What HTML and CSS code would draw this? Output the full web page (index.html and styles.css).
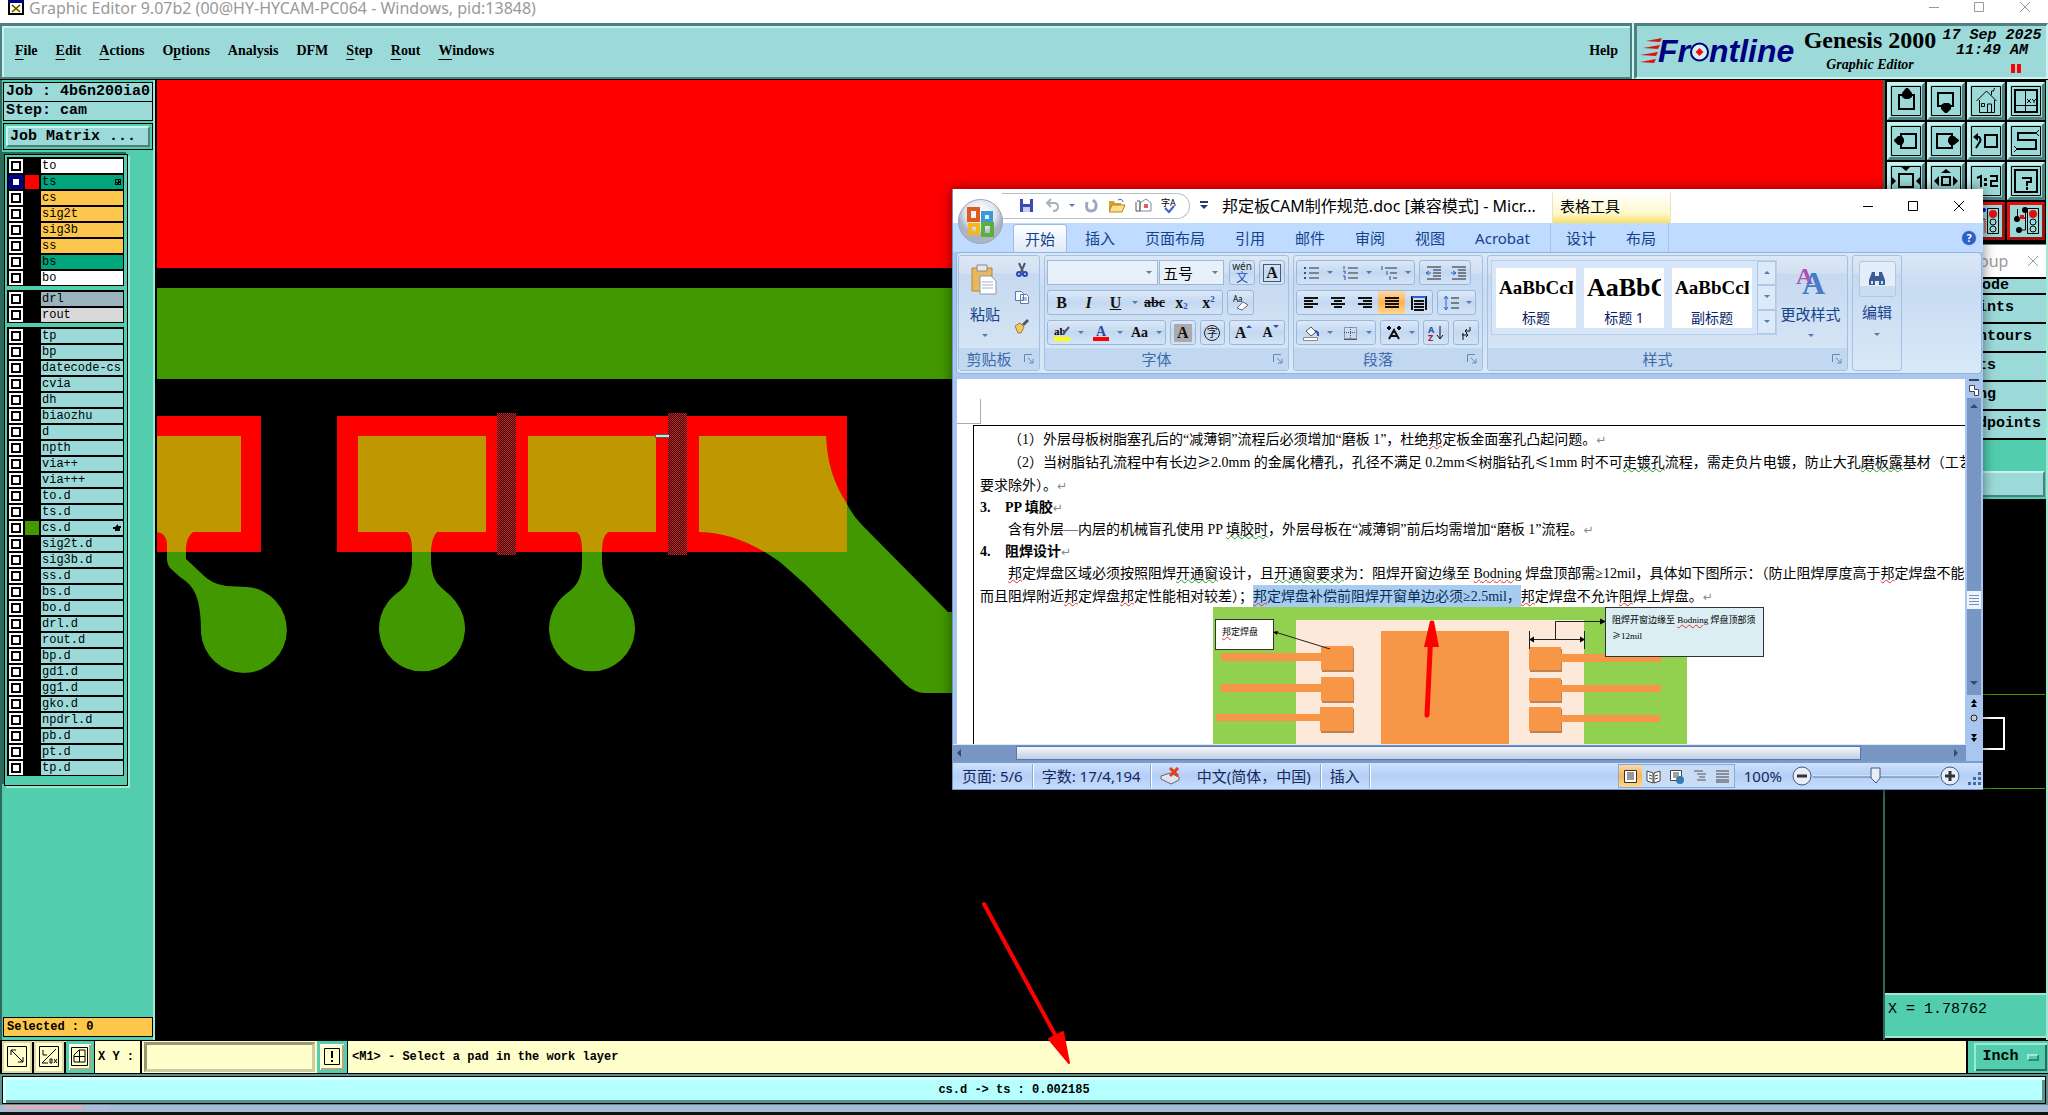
FILE: index.html
```html
<!DOCTYPE html>
<html lang="zh-CN">
<head>
<meta charset="utf-8">
<title>Graphic Editor</title>
<link rel="stylesheet" href="styles.css">
</head>
<body>
<header class="titlebar">
  <svg class="app-icon" width="16" height="16"><rect x="1" y="-2" width="14" height="16" fill="#fff" stroke="#000" stroke-width="2"/><path d="M0 0h16v3H0z" fill="#000080"/><path d="M4 5l8 7M12 5l-8 7" stroke="#c8b400" stroke-width="2"/><path d="M4 5l8 7M12 5l-8 7" stroke="#222" stroke-width="1"/></svg>
  <h1>Graphic Editor 9.07b2 (00@HY-HYCAM-PC064 - Windows, pid:13848)</h1>
  <svg width="110" height="16" fill="none" stroke="#999"><path d="M0 7.500h10M45.500 2.500h9v9h-9zM91 2l10 10M101 2l-10 10"/></svg>
</header>

<div class="menurow">
  <nav class="menubar">
    <a href="#"><u>F</u>ile</a><a href="#"><u>E</u>dit</a><a href="#"><u>A</u>ctions</a><a href="#">O<u>p</u>tions</a><a href="#">Analysis</a><a href="#">DFM</a><a href="#"><u>S</u>tep</a><a href="#"><u>R</u>out</a><a href="#"><u>W</u>indows</a>
    <a class="help" href="#">Help</a>
  </nav>
  <div class="brand">
    <div class="logo">
      <svg width="22" height="26" fill="#e01010"><path d="M6 3l16-3-2 4zM3 10l17-3-2 4zM0 17l18-3-2 4zM0 24l16-3-2 4z"/></svg>
      <b>Fr<svg width="19" height="22"><circle cx="9.500" cy="12" r="8.500" fill="#d8f0f0" stroke="#000080" stroke-width="2"/><path d="M9.500 8l4 4-4 4-4-4z" fill="#f01010"/></svg>ntline</b>
    </div>
    <div class="product"><strong>Genesis 2000</strong><em>Graphic Editor</em></div>
    <div class="clock"><span>17 Sep 2025</span><span>11:49 AM</span><i class="pause"></i></div>
  </div>
</div>

<main class="workspace">
  <aside class="left">
    <div class="jobbox">
      <div class="cell">Job : 4b6n200ia0</div>
      <div class="cell">Step: cam</div>
    </div>
    <div class="matrix"><button>Job Matrix ...</button></div>
    <div class="layerzone">
      <div class="layers">
        <ul>
          <li><label><input type="checkbox"><i></i><span class="w">to</span></label></li>
          <li><label><input type="checkbox" checked><i class="red"></i><span class="g">ts<svg width="6" height="6"><path d="M0 0h6v6H0zM1 1v2h2V1zM4 1v1h1V1zM1 4v1h1V4zM4 4v1h1V4z" fill-rule="evenodd"/></svg></span></label></li>
          <li><label><input type="checkbox"><i></i><span class="o">cs</span></label></li>
          <li><label><input type="checkbox"><i></i><span class="o">sig2t</span></label></li>
          <li><label><input type="checkbox"><i></i><span class="o">sig3b</span></label></li>
          <li><label><input type="checkbox"><i></i><span class="o">ss</span></label></li>
          <li><label><input type="checkbox"><i></i><span class="g">bs</span></label></li>
          <li><label><input type="checkbox"><i></i><span class="w">bo</span></label></li>
        </ul>
        <ul>
          <li><label><input type="checkbox"><i></i><span class="s">drl</span></label></li>
          <li><label><input type="checkbox"><i></i><span class="l">rout</span></label></li>
        </ul>
        <ul>
          <li><label><input type="checkbox"><i></i><span>tp</span></label></li>
          <li><label><input type="checkbox"><i></i><span>bp</span></label></li>
          <li><label><input type="checkbox"><i></i><span>datecode-cs</span></label></li>
          <li><label><input type="checkbox"><i></i><span>cvia</span></label></li>
          <li><label><input type="checkbox"><i></i><span>dh</span></label></li>
          <li><label><input type="checkbox"><i></i><span>biaozhu</span></label></li>
          <li><label><input type="checkbox"><i></i><span>d</span></label></li>
          <li><label><input type="checkbox"><i></i><span>npth</span></label></li>
          <li><label><input type="checkbox"><i></i><span>via++</span></label></li>
          <li><label><input type="checkbox"><i></i><span>via+++</span></label></li>
          <li><label><input type="checkbox"><i></i><span>to.d</span></label></li>
          <li><label><input type="checkbox"><i></i><span>ts.d</span></label></li>
          <li><label><input type="checkbox"><i class="green"></i><span>cs.d<svg width="8" height="8"><path d="M0 3h2l3-3v2h3v2H7v3H2V5H0z"/></svg></span></label></li>
          <li><label><input type="checkbox"><i></i><span>sig2t.d</span></label></li>
          <li><label><input type="checkbox"><i></i><span>sig3b.d</span></label></li>
          <li><label><input type="checkbox"><i></i><span>ss.d</span></label></li>
          <li><label><input type="checkbox"><i></i><span>bs.d</span></label></li>
          <li><label><input type="checkbox"><i></i><span>bo.d</span></label></li>
          <li><label><input type="checkbox"><i></i><span>drl.d</span></label></li>
          <li><label><input type="checkbox"><i></i><span>rout.d</span></label></li>
          <li><label><input type="checkbox"><i></i><span>bp.d</span></label></li>
          <li><label><input type="checkbox"><i></i><span>gd1.d</span></label></li>
          <li><label><input type="checkbox"><i></i><span>gg1.d</span></label></li>
          <li><label><input type="checkbox"><i></i><span>gko.d</span></label></li>
          <li><label><input type="checkbox"><i></i><span>npdrl.d</span></label></li>
          <li><label><input type="checkbox"><i></i><span>pb.d</span></label></li>
          <li><label><input type="checkbox"><i></i><span>pt.d</span></label></li>
          <li><label><input type="checkbox"><i></i><span>tp.d</span></label></li>
        </ul>
      </div>
    </div>
    <div class="selected">Selected : 0</div>
  </aside>

  <svg class="board" aria-label="PCB view">
    <defs>
      <pattern id="hatch" width="2" height="2" patternUnits="userSpaceOnUse"><path d="M0 0h2v2H0z" fill="#1c1414"/><path d="M0 0h1v1H0zM1 1h1v1H1z" fill="#e01818"/></pattern>
      <clipPath id="mask"><path d="M0 416h261v136H0zM337 416h510v136H337z"/></clipPath>
      <g id="copper">
        <path d="M100 436H241V532H193Q187 536 186 547V559L201 573Q211 584 226 586L247 587A43 43 0 1 1 201 633Q201 603 194 591C190 584 186 581 180 577L170 568Q167 564 167 558V543Q166 533 157 532H100z"/>
        <path d="M358 436H486V532H437Q432 537 431 549V563Q432 576 437 583C444 591 450 594 456 602A43 43 0 1 1 388 602C394 594 402 591 407 583Q411 575 412 563V549Q412 536 407 532H358z"/>
        <path d="M528 436H656V532H608Q602 537 602 549V563Q603 576 608 583C614 591 620 594 626 602A43 43 0 1 1 558 602C564 594 572 591 577 583Q582 575 582 563V549Q582 536 577 532H528z"/>
        <path d="M699 436H826Q827 474 847 504Q853 516 862 525L948 612H990V693H925Q915 693 905 684L806 585L780 562Q765 552 763 551Q730 532 699 532z"/>
      </g>
    </defs>
    <rect width="100%" height="188" fill="#f00"/>
    <rect y="208" width="100%" height="91" fill="#429800"/>
    <g transform="translate(-157 -80)">
      <path d="M100 416h161v136H100zM337 416h510v136H337z" fill="#f00"/>
      <use href="#copper" fill="#429800"/>
      <g clip-path="url(#mask)"><use href="#copper" fill="#bf9700"/></g>
      <path d="M497 413h19v142h-19zM668 413h19v142h-19z" fill="url(#hatch)"/>
      <path d="M655 434h14v4h-14z" fill="#555"/><path d="M656 435h13v2h-13z" fill="#ddd"/>
    </g>
  </svg>

  <aside class="right">
    <div class="tools">
      <button><svg><path class="f" d="M.5.500h29v29H.500z"/><path class="t" d="M8 9h15v14H8z"/><path d="M15 2h2l4 5v4l-3 2h-4l-3-2V7z"/></svg></button>
      <button><svg><path class="f" d="M.500.500h29v29H.500z"/><path class="t" d="M7 7h15v13H7z"/><path d="M14 27h2l4-4v-4l-2-2h-5l-3 2v4z"/></svg></button>
      <button><svg><path class="f" d="M.500.500h29v29H.500zM5.500 15l10-10 10 10M8.500 14v12.500h15V14M16.500 26v-8h4v8M10.500 17.500h3v3h-3zM20.500 9V5h2l1-3"/></svg></button>
      <button><svg><path class="f" d="M.500.500h29v29H.500zM14.500 4v22M4 19.500h22M16 13l4 4M20 13l-4 4M21 13l2 2 2-2M23 15v2"/><path class="t" d="M4 4h22v22H4z"/></svg></button>
      <button><svg><path class="f" d="M.500.500h29v29H.500z"/><path class="t" d="M10 8h15v14H10z"/><path d="M3 14l4-4h4l2 3v3l-2 3H7l-4-4z"/></svg></button>
      <button><svg><path class="f" d="M.500.500h29v29H.500z"/><path class="t" d="M6 8h15v14H6z"/><path d="M28 14l-5-4h-4l-2 3v3l2 3h4l5-4z"/></svg></button>
      <button><svg><path class="f" d="M.500.500h29v29H.500z"/><path class="t" d="M14 9h12v12H14zM4 11h4q3 3 0 6l-3 5"/><path d="M2 11l5-4v8z"/></svg></button>
      <button><svg><path class="f" d="M.500.500h29v29H.500zM28 4l-3 3 3 3M3 20l3 3-3 3"/><path class="t" d="M25 7H7v7h18v9H6"/></svg></button>
      <button><svg><path class="f" d="M.500.500h29v29H.500z"/><path class="t" d="M8 8h14v13H8z"/><path d="M0 10l5 5-5 5zM30 10l-5 5 5 5zM9 0h11l-5 5z"/></svg></button>
      <button><svg><path class="f" d="M.500.500h29v29H.500z"/><path class="t" d="M11 11h8v8h-8z"/><path d="M3 15l5-5v10zM27 15l-5-5v10zM10 7l5-4 5 4zM10 23l5 4 5-4z"/></svg></button>
      <button><svg><path class="f" d="M.500.500h29v29H.500z"/><path class="t" d="M6 12l4-2v11M19 10h7v5h-6v5h7"/><path d="M13 12h3v3h-3zM13 17h3v3h-3z"/></svg></button>
      <button><svg><path class="f" d="M.500.500h29v29H.500z"/><path class="t" d="M4 4h22v22H4zM11 12h9v4h-4v4"/><path d="M15 21h2v3h-2z"/></svg></button>
      <button class="alert"><svg><path class="f" d="M.500.500h29v29H.500z"/></svg></button>
      <button class="alert"><svg><path class="f" d="M.500.500h29v29H.500z"/></svg></button>
      <button class="alert"><svg><path class="f" d="M16.500 2.500h11v25h-11z"/><path d="M8 13h6v14" fill="none" stroke="#e01010"/><circle cx="22" cy="8" r="4" fill="#e01010"/><circle class="f" cx="22" cy="16" r="3"/><circle class="f" cx="22" cy="23" r="3"/><circle cx="13" cy="4" r="2" fill="#00f"/></svg></button>
      <button class="alert"><svg><path class="f" d="M16.500 2.500h11v25h-11zM6.500 3v10M14.500 5v19H8"/><circle cx="22" cy="8" r="4" fill="#e01010"/><circle class="f" cx="22" cy="16" r="3"/><circle class="f" cx="22" cy="23" r="3"/><circle cx="6" cy="13" r="3"/><circle cx="14" cy="4" r="3"/><circle cx="8" cy="24" r="3"/><path d="M8 12h6M10 9v3M12 9v3" stroke="#e01010" stroke-width="2"/></svg></button>
    </div>
    <section class="popup">
      <header><span>oup</span><svg width="12" height="12" stroke="#999" fill="none"><path d="M1 1l10 10M11 1L1 11"/></svg></header>
      <div class="mode">ode</div>
      <a href="#">ints</a><a href="#">ntours</a><a href="#">ts</a><a href="#">ng</a><a href="#">dpoints</a>
      <div class="popfoot"><button aria-label="Close"></button></div>
    </section>
    <svg class="minimap"><path d="M0 195.500h160M0 289.500h160" stroke="#429800"/><path d="M18 219h101v31H18z" fill="none" stroke="#fff" stroke-width="2"/></svg>
    <div class="coords">X = 1.78762</div>
  </aside>
</main>

<form class="xybar">
  <button type="button" class="tick" aria-label="Snap"><svg width="20" height="22" fill="none" stroke="#000"><path d="M.500.500h19v20H.500zM4 4l12 12M4 9V4h5M16 11v5h-5"/></svg></button>
  <button type="button" class="tick" aria-label="Angle"><svg width="20" height="22" fill="none" stroke="#000"><path d="M.500.500h19v20H.500zM3 17L17 3M3 17h6M4 4v5h4M11 13h2v4h-2zM15 13l3 4M18 13l-3 4"/></svg></button>
  <button type="button" class="tick on" aria-label="Grid"><svg width="18" height="20" fill="none" stroke="#000"><path d="M.500.500h16v18H.500zM3 8l5-5h6v12H3zM8.500 3v12M3 9.500h11"/></svg></button>
  <label for="xy">X Y :</label>
  <input id="xy" type="text">
  <button type="button" class="tick on bang" aria-label="Message"><svg width="16" height="18" fill="none" stroke="#000"><path d="M.500.500h15v16H.500z"/><path d="M8 3v7M8 12v2" stroke-width="2"/></svg></button>
  <output>&lt;M1&gt; - Select a pad in the work layer</output>
  <button type="button" class="unit">Inch <i></i></button>
</form>
<footer class="status"><p>cs.d -&gt; ts : 0.002185</p></footer>
<div class="taskedge"><i class="pink"></i><i class="lav"></i></div>

<section class="word">
  <header class="wtitle">
    <div class="orb"><svg width="46" height="46"><defs><radialGradient id="og" cy=".3"><stop offset="0" stop-color="#fff"/><stop offset=".7" stop-color="#dfe4ec"/><stop offset="1" stop-color="#aab4c6"/></radialGradient></defs><circle cx="22.500" cy="22.500" r="22" fill="url(#og)" stroke="#9aa5b8"/><g fill="none" stroke-width="4"><path d="M11 10h9v11h-9z" stroke="#e05a20"/><path d="M25 14h8v8h-8z" stroke="#3a9ad8"/><path d="M12 26h8v8h-8z" stroke="#f5b81c"/><path d="M25 25h9v11h-9z" stroke="#5eae3a"/></g></svg></div>
    <div class="qat">
      <button aria-label="保存"><svg><path d="M1 1h13v13H1z" fill="#3a48b8"/><path d="M4 1h7v5H4z" fill="#fff"/><path d="M4 9h7v5H4z" fill="#c8d0f0"/></svg></button>
      <button class="n" aria-label="撤消"><svg fill="none" stroke="#a8b0c0" stroke-width="2"><path d="M3 5h6q4 0 4 4t-5 4M6 1L2 5l4 4"/></svg></button>
      <button class="n" aria-label="撤消列表"><svg class="dd"><path d="M0 0h6L3 3z"/></svg></button>
      <button aria-label="重复"><svg fill="none" stroke="#9aa8c4" stroke-width="3"><path d="M4 4q-2 9 4 9t5-8M10 2l3 3"/></svg></button>
      <button aria-label="打开"><svg><path d="M0 3h5l1 2h6v9H0z" fill="#d8a030"/><path d="M3 7h13l-3 7H0z" fill="#ffe08a" stroke="#b88418"/><path d="M9 2q4-2 5 2" fill="none" stroke="#3a62b0"/></svg></button>
      <button aria-label="附件"><svg><path d="M5 5l6-4 5 4v8H5z" fill="#fff" stroke="#7a8aa8"/><path d="M9 6h4v4H9z" fill="#e06060"/><path d="M1 4v9h4V3H2" fill="none" stroke="#555"/></svg></button>
      <button aria-label="拼写"><svg><text x="0" y="8" font-size="9">字A</text><path d="M4 10l4 4 5-6" fill="none" stroke="#3a62c8" stroke-width="2"/></svg></button>
    </div>
    <svg class="more" width="8" height="10"><path d="M0 0h8v2H0zM0 4h8l-4 4z" fill="#1e3c78"/></svg>
    <h2>邦定板CAM制作规范.doc [兼容模式] - Micr...</h2>
    <div class="ctx">表格工具</div>
    <svg class="wctl" width="102" height="14" fill="none" stroke="#000"><path d="M0 7.500h10M45.500 2.500h9v9h-9zM91 2l10 10M101 2l-10 10"/></svg>
  </header>
  <nav class="tabs">
    <a class="on" href="#">开始</a><a href="#">插入</a><a href="#">页面布局</a><a href="#">引用</a><a href="#">邮件</a><a href="#">审阅</a><a href="#">视图</a><a href="#">Acrobat</a>
    <span class="ctxtabs"><a href="#">设计</a><a href="#">布局</a></span>
    <button class="whelp">?</button>
  </nav>
  <div class="ribbon">
    <section class="grp clip">
      <div class="body">
        <button class="big"><svg width="28" height="32"><path d="M1 4h20v23H1z" fill="#e8b860" stroke="#b88430"/><path d="M6 1h10v6H6z" fill="#e8e8e8" stroke="#888"/><path d="M9 12h11l5 5v13H9z" fill="#fff" stroke="#8a9ab8"/><path d="M11 18h11M11 21h11M11 24h11" stroke="#a0b0cc"/></svg><span>粘贴</span><svg class="dd"><path d="M0 0h6L3 3z"/></svg></button>
        <div class="stack">
          <button aria-label="剪切"><svg><path d="M5 1l4 9M11 1L7 10" stroke="#556" fill="none" stroke-width="2"/><circle cx="5" cy="12" r="2" fill="none" stroke="#2a48b0" stroke-width="2"/><circle cx="11" cy="12" r="2" fill="none" stroke="#2a48b0" stroke-width="2"/></svg></button>
          <button aria-label="复制"><svg fill="#fff" stroke="#5878b0"><path d="M1.500 1.500h6l2 2v7h-8zM6.500 4.500h6l2 2v7h-8z"/><path d="M8 8h5M8 10h5"/></svg></button>
          <button aria-label="格式刷"><svg><path d="M1 8l5-3 4 4-3 6H4z" fill="#f0c860" stroke="#a08030"/><path d="M8 6l5-5 2 2-5 5z" fill="#556"/></svg></button>
        </div>
      </div>
      <h3><span>剪贴板</span><svg class="lch"><path d="M.500 8V.500H8M4 4l5 5M9 5v4H5"/></svg></h3>
    </section>
    <section class="grp font">
      <div class="body rows">
        <div class="row">
          <span class="set combo"><input class="fname" type="text" aria-label="字体"><button aria-label="字体列表"><svg class="dd"><path d="M0 0h6L3 3z"/></svg></button></span><span class="set combo"><input class="fsize" type="text" value="五号" aria-label="字号"><button aria-label="字号列表"><svg class="dd"><path d="M0 0h6L3 3z"/></svg></button></span>
          <button class="one wen"><small>wén</small><span>文</span></button>
          <button class="one serif"><span class="boxed">A</span></button>
        </div>
        <div class="row">
          <span class="set serif"><button>B</button><button><i>I</i></button><button><u>U</u></button><button class="arr"><svg class="dd"><path d="M0 0h6L3 3z"/></svg></button><button class="sm"><s>abc</s></button><button>x<sub>2</sub></button><button>x<sup>2</sup></button></span>
          <button class="one"><svg><text x="0" y="7" font-size="8">Aa</text><path d="M4 13l6-6 5 3-6 5z" fill="#fff" stroke="#667"/></svg></button>
        </div>
        <div class="row">
          <span class="set serif"><button><svg><text x="0" y="10" font-size="11">ab</text><path d="M9 9l6-7" stroke="#556" stroke-width="2"/><path d="M0 12h16v4H0z" fill="#ff0"/></svg></button><button class="arr"><svg class="dd"><path d="M0 0h6L3 3z"/></svg></button><button><svg><text x="3" y="11" font-size="14" font-weight="bold" fill="#2a50a0">A</text><path d="M0 12h16v4H0z" fill="#f00"/></svg></button><button class="arr"><svg class="dd"><path d="M0 0h6L3 3z"/></svg></button><button class="sm">Aa</button><button class="arr"><svg class="dd"><path d="M0 0h6L3 3z"/></svg></button></span>
          <button class="one serif"><span class="shade">A</span></button>
          <button class="one"><span class="ring">字</span></button>
          <span class="set serif"><button>A<svg class="dd tip"><path d="M0 3h6L3 0z"/></svg></button><button class="sm">A<svg class="dd tip"><path d="M0 0h6L3 3z"/></svg></button></span>
        </div>
      </div>
      <h3><span>字体</span><svg class="lch"><path d="M.500 8V.500H8M4 4l5 5M9 5v4H5"/></svg></h3>
    </section>
    <section class="grp para">
      <div class="body rows">
        <div class="row">
          <span class="set"><button aria-label="项目符号"><svg><path d="M6 3h10M6 8h10M6 13h10" stroke="#333"/><path d="M1 2h2v2H1zM1 7h2v2H1zM1 12h2v2H1z" fill="#2a50a0"/></svg></button><button class="arr"><svg class="dd"><path d="M0 0h6L3 3z"/></svg></button><button aria-label="编号"><svg><path d="M6 3h10M6 8h10M6 13h10" stroke="#333"/><path d="M2 1v3M1 6h2v3M1 11h2v4" stroke="#2a50a0" fill="none"/></svg></button><button class="arr"><svg class="dd"><path d="M0 0h6L3 3z"/></svg></button><button aria-label="多级"><svg><path d="M4 3h12M9 8h7M12 13h4" stroke="#333"/><path d="M1 1v4M6 6v4M9 11v4" stroke="#2a50a0"/></svg></button><button class="arr"><svg class="dd"><path d="M0 0h6L3 3z"/></svg></button></span>
          <span class="set"><button aria-label="减少缩进"><svg stroke="#222"><path d="M2 2h14M8 5h8M8 8h8M8 11h8M2 14h14"/><path d="M1 8h5M4 6L1 8l3 2" stroke="#2a60d0" fill="none"/></svg></button><button aria-label="增加缩进"><svg stroke="#222"><path d="M2 2h14M8 5h8M8 8h8M8 11h8M2 14h14"/><path d="M1 8h5M3 6l3 2-3 2" stroke="#2a60d0" fill="none"/></svg></button></span>
        </div>
        <div class="row">
          <span class="set"><button aria-label="左"><svg class="ln"><path d="M1 3h14M1 6h9M1 9h14M1 12h9"/></svg></button><button aria-label="中"><svg class="ln"><path d="M1 3h14M4 6h8M1 9h14M4 12h8"/></svg></button><button aria-label="右"><svg class="ln"><path d="M1 3h14M6 6h9M1 9h14M6 12h9"/></svg></button><button class="hot" aria-label="两端"><svg class="ln"><path d="M1 3h14M1 6h14M1 9h14M1 12h14"/></svg></button><button aria-label="分散"><svg class="ln"><path d="M3 6h10M3 9h10M3 12h10M3 15h10M1 1v14M15 1v14"/><path d="M1 2h14" stroke="#2a60d0"/></svg></button></span>
          <span class="set"><button aria-label="行距"><svg><path d="M8 3h8M8 8h8M8 13h8" stroke="#222"/><path d="M3 2v12M1 4l2-3 2 3M1 12l2 3 2-3" stroke="#2a60d0" fill="none"/></svg></button><button class="arr"><svg class="dd"><path d="M0 0h6L3 3z"/></svg></button></span>
        </div>
        <div class="row">
          <span class="set"><button aria-label="底纹"><svg><path d="M3 6l5-4 5 5-5 4z" fill="#fff" stroke="#556"/><path d="M12 6q4 1 3 5" stroke="#2a50a0" stroke-width="2" fill="none"/><path d="M.500 12.500h14v3H.500z" fill="#ffe" stroke="#889"/></svg></button><button class="arr"><svg class="dd"><path d="M0 0h6L3 3z"/></svg></button><button aria-label="框线"><svg fill="none" stroke="#556"><path stroke-dasharray="1 1" d="M2.500 2.500h12v11h-12zM8.500 2v11M2 7.500h12"/><path d="M2 14.500h13"/></svg></button><button class="arr"><svg class="dd"><path d="M0 0h6L3 3z"/></svg></button></span>
          <span class="set"><button aria-label="字符缩放"><svg fill="none" stroke="#111" stroke-width="2"><path d="M3 14l5-9 5 9M5 11h6M1 3h4M3 1v4M11 3h4M13 1v4"/></svg></button><button class="arr"><svg class="dd"><path d="M0 0h6L3 3z"/></svg></button></span>
          <button class="one" aria-label="排序"><svg><text x="0" y="8" font-size="9" font-weight="bold" fill="#2a50a0">A</text><text x="0" y="16" font-size="9" font-weight="bold" fill="#a02020">Z</text><path d="M12 1v12M9 10l3 4 3-4" stroke="#111" fill="none"/></svg></button>
          <button class="one" aria-label="标记"><svg fill="none" stroke="#111"><path d="M12 2v4H7M9 4L7 6l2 2M4 10h6M8 8l2 2-2 2M5 8v7"/></svg></button>
        </div>
      </div>
      <h3><span>段落</span><svg class="lch"><path d="M.500 8V.500H8M4 4l5 5M9 5v4H5"/></svg></h3>
    </section>
    <section class="grp styles">
      <div class="body">
        <div class="gallery">
          <button class="card"><b>AaBbCcD</b><span>标题</span></button>
          <button class="card h1"><b>AaBbC</b><span>标题 1</span></button>
          <button class="card"><b>AaBbCcD</b><span>副标题</span></button>
          <div class="gscroll"><button aria-label="上"><svg class="dd"><path d="M0 3h6L3 0z"/></svg></button><button aria-label="下"><svg class="dd"><path d="M0 0h6L3 3z"/></svg></button><button aria-label="更多"><svg class="dd"><path d="M0 0h6L3 3z"/></svg></button></div>
        </div>
        <button class="big"><svg width="32" height="32" class="aa"><text x="1" y="20" font-size="24" fill="#b050b0">A</text><text x="7" y="30" font-size="32" fill="#4a7ac8">A</text></svg><span>更改样式</span><svg class="dd"><path d="M0 0h6L3 3z"/></svg></button>
      </div>
      <h3><span>样式</span><svg class="lch"><path d="M.500 8V.500H8M4 4l5 5M9 5v4H5"/></svg></h3>
    </section>
    <section class="grp edit">
      <button class="big"><span class="bino"><svg width="16" height="16" fill="#3a5a98"><path d="M3 1h3v4h4V1h3l3 8v5h-6v-4H6v4H0V9z"/><path d="M2 10h2v3H2zM12 10h2v3h-2z" fill="#cfe0f8"/></svg></span><span>编辑</span><svg class="dd"><path d="M0 0h6L3 3z"/></svg></button>
    </section>
  </div>
  <div class="docwrap">
    <div class="doc">
      <div class="corner"></div>
      <article class="cellbox">
        <p class="in">（1）外层母板树脂塞孔后的“减薄铜”流程后必须增加“磨板 1”，杜绝<span class="er">邦</span>定板金面塞孔凸起问题。<i class="ret">↵</i></p>
        <p class="in">（2）当树脂钻孔流程中有长边<span class="wide">≥</span>2.0mm 的金属化槽孔，孔径不满足 0.2mm<span class="wide">≤</span>树脂钻孔<span class="wide">≤</span>1mm 时不可<span class="gr">走镀孔</span>流程，需走负片电镀，防止大孔<span class="gr">磨板露</span>基材（工艺</p>
        <p>要求除外）。<i class="ret">↵</i></p>
        <h4><span>3.</span>PP 填胶<i class="ret">↵</i></h4>
        <p class="in">含有外层—内层的机械盲孔使用 PP <span class="gr">填胶时</span>，外层母板在“减薄铜”前后均需增加“磨板 1”流程。<i class="ret">↵</i></p>
        <h4><span>4.</span>阻焊设计<i class="ret">↵</i></h4>
        <p class="in"><span class="er">邦</span>定焊盘区域必须按照阻焊<span class="gr">开通窗</span>设计，且<span class="gr">开通窗要求</span>为：阻焊开窗边缘至 <span class="er">Bodning</span> 焊盘顶部需≥12mil，具体如下图所示：（防止阻焊厚度高于<span class="er">邦</span>定焊盘不能打</p>
        <p>而且阻焊附近<span class="er">邦</span>定焊盘<span class="er">邦</span>定性能相对较差）；<mark><span class="er">邦</span>定焊盘补偿前阻焊开窗单边必须≥2.5mil，</mark><span class="er">邦</span>定焊盘不允许<span class="er">阻</span>焊上焊盘。<i class="ret">↵</i></p>
        <div class="figure">
          <svg width="560" height="140">
            <path d="M0 0h474v140H0z" fill="#92d050"/><path d="M83 13h288v127H83z" fill="#fce9da"/>
            <g fill="#c08050"><path d="M109 41h32v24h-32zM109 72h32v24h-32zM108 102h33v24h-33zM317 42h32v23h-32zM317 73h32v23h-32zM317 102h32v24h-32z"/></g>
            <g fill="#f79646"><path d="M168 24h128v116H168zM108 39h32v24h-32zM108 70h32v24h-32zM107 100h33v24h-33zM8 46h101v8H8zM8 77h101v8H8zM3 107h105v7H3zM316 40h32v23h-32zM316 71h32v23h-32zM316 100h32v24h-32zM348 47h100v8H348zM348 78h100v7H348zM348 108h99v7h-99z"/></g>
            <g fill="none" stroke="#222"><path d="M117 42L62 25M316.500 24v18M371.500 24v18M320 32.500h48M342.500 32V14.500H388"/></g>
            <path d="M60 25l5-1-1 4zM316 32.500l5-3v6zM372 32.500l-5-3v6zM393 14.500l-6-3v6z"/>
            <path d="M214 108l4-84" stroke="#f00" stroke-width="5" stroke-linecap="round"/><path d="M217 14q2-1 4 0l5 26h-15z" fill="#f00"/>
          </svg>
          <div class="note a"><span class="er">邦</span>定焊盘</div>
          <div class="note b">阻焊开窗边缘至 <span class="er">Bodning</span> 焊盘顶部须<br><span class="wide">≥</span>12mil</div>
        </div>
      </article>
    </div>
    <div class="vscroll">
      <i class="split"></i>
      <svg width="14" height="14" fill="#fff" stroke="#445"><path d="M2.500 1.500h5v4h4v6h-4v-4h-5z"/></svg>
      <div class="vtrack"><svg class="dk"><path d="M0 4h8L4 0z"/></svg><i class="vthumb"></i><svg class="dk"><path d="M0 0h8L4 4z"/></svg></div>
      <svg width="14" height="46"><path d="M7 1l3 4H4zM7 5l3 4H4zM4 40h6l-3 4zM4 36h6l-3 4z"/><circle cx="7" cy="20" r="3" fill="#ccc" stroke="#222"/></svg>
    </div>
  </div>
  <div class="hscroll"><svg class="dk"><path d="M4 0v8L0 4z"/></svg><i class="hthumb"></i><svg class="dk"><path d="M0 0v8l4-4z"/></svg></div>
  <footer class="wstatus">
    <span>页面: 5/6</span><span>字数: 17/4,194</span>
    <span class="lang"><svg width="22" height="18"><path d="M1 9l9-3 9 4v3l-8 4-10-5z" fill="#dfe4ee" stroke="#667"/><path d="M10 1l8 8M18 1l-8 8" stroke="#e04020" stroke-width="3"/></svg>中文(简体，中国)</span><span>插入</span>
    <div class="views"><button class="hot" aria-label="页面视图"><svg><path d="M1.500 1.500h12v12h-12z" fill="#fff" stroke="#333"/><path d="M4 4h7M4 6h7M4 8h7M4 10h7" stroke="#333"/></svg></button><button aria-label="阅读"><svg><path d="M1 2l6 2v10l-6-2zM14 2L8 4v10l6-2z" fill="#fff" stroke="#444"/><path d="M3 6l3 1M3 9l3 1M12 6L9 7M12 9l-3 1" stroke="#444"/></svg></button><button aria-label="Web"><svg><path d="M1.500 1.500h11v10h-11z" fill="#fff" stroke="#444"/><path d="M4 4h6M4 6h6M4 8h6" stroke="#444"/><circle cx="11" cy="11" r="4" fill="#3878b0"/></svg></button><button aria-label="大纲"><svg><path d="M2 2h9M5 5h9M7 8h6M5 11h9" stroke="#555"/></svg></button><button aria-label="草稿"><svg><path d="M1 2h13M1 5h13M1 8h13M1 11h13M1 13h13" stroke="#444"/></svg></button></div>
    <b>100%</b>
    <svg class="zoomer" width="180" height="24"><path d="M31 12h126" stroke="#e8f0ff"/><path d="M31 13h126" stroke="#5878a8"/><g fill="#e8eef8" stroke="#44587c"><circle cx="20" cy="12" r="9"/><circle cx="168" cy="12" r="9"/><path d="M89 4h9v10l-4 5-5-5z"/></g><path d="M15 12h10M163 12h10M168 7v10" stroke="#333" stroke-width="3"/></svg>
    <svg class="grip" width="14" height="14" fill="#4a6a9c"><path d="M10 0h3v3h-3zM5 5h3v3H5zM10 5h3v3h-3zM0 10h3v3H0zM5 10h3v3H5zM10 10h3v3h-3z"/></svg>
  </footer>
</section>

<svg class="pointer" width="100" height="170"><path d="M10 9l75 138" stroke="#f00" stroke-width="4" stroke-linecap="round"/><path d="M95 168l-20-24 14-7z" fill="#f00" stroke="#f00" stroke-linejoin="round" stroke-width="2"/></svg>
</body>
</html>
```
FILE: styles.css
```css
:root {
  --aqua: #9cdada;
  --teal: #52ceae;
  --hi: #c8f5f0;
  --lo: #4f8080;
  --cream: #ffffcc;
  --mono: "Liberation Mono", monospace;
  --serif: "Liberation Serif", "Noto Sans CJK SC", serif;
  --ui: "Noto Sans", "Noto Sans CJK SC", sans-serif;
}
* { box-sizing: border-box; }
body { margin: 0; height: 100vh; display: flex; flex-direction: column; position: relative; overflow: hidden; background: #000; font: 15px/20px var(--ui); color: #000; }
button { font: inherit; color: inherit; padding: 0; margin: 0; border: 0; background: none; display: flex; align-items: center; justify-content: center; }
a { color: inherit; text-decoration: none; }
h1, h2, h3, h4, p, ul { margin: 0; padding: 0; font-weight: normal; }
svg { display: block; flex: none; }
ul { list-style: none; }

.titlebar { flex: none; height: 23px; background: #fff; display: flex; padding: 0 9px 0 8px; gap: 5px; }
.titlebar h1 { flex: 1; font-size: 16px; line-height: 16px; color: #999; }

.menurow { flex: none; height: 57px; display: flex; gap: 2px; background: var(--hi); border-bottom: 1px solid #000; font: bold 14px/20px var(--serif); }
.menubar { flex: 1; display: flex; align-items: center; gap: 18px; padding: 0 12px 2px 13px; background: var(--aqua); border: 2px solid var(--lo); border-top-width: 3px; box-shadow: inset 2px 2px var(--hi); }
.menubar u { text-underline-offset: 4px; }
.help { margin-left: auto; }
.brand { width: 414px; display: flex; background: var(--aqua); border: 2px solid var(--hi); border-top: 3px solid var(--lo); border-left: 3px solid var(--lo); padding: 0 0 0 3px; }
.logo { display: flex; width: 162px; padding-top: 12px; }
.logo b { display: flex; font: italic bold 32px/26px "Liberation Sans", sans-serif; color: #000080; margin-left: -4px; }
.logo b svg { margin-top: 2px; }
.product { width: 136px; display: flex; flex-direction: column; align-items: center; white-space: nowrap; }
.product strong { font-size: 24px; line-height: 28px; }
.product em { line-height: 22px; }
.clock { flex: 1; font: italic bold 15px/15px var(--mono); padding-top: 2px; display: flex; flex-direction: column; align-items: center; white-space: nowrap; }
.pause { width: 10px; height: 9px; border: solid #f00; border-width: 0 4px; margin: 6px 0 0 48px; }

.workspace { flex: 1; min-height: 0; display: flex; background: #000; }
.left { width: 157px; flex: none; display: flex; flex-direction: column; background: var(--teal); border-right: 2px solid #000; padding: 2px 2px 3px 3px; font: bold 15px/17px var(--mono); box-shadow: inset -2px 0 #9fe8d4, inset 2px 0 #2d6a5c; white-space: nowrap; }
.jobbox { border: 1px solid #000; background: #000; display: grid; gap: 1px; }
.cell { background: var(--aqua); padding-left: 2px; height: 18px; }
.matrix { margin: 2px 0; border: 1px solid #000; padding: 2px; }
.matrix button { width: 100%; justify-content: flex-start; height: 21px; padding-left: 2px; background: var(--aqua); border: 2px solid; border-color: var(--hi) var(--lo) var(--lo) var(--hi); }
.layerzone { flex: 1; }
.layers { width: 124px; margin: 2px 0 0 1px; padding: 2px 2px 9px; border: 1px solid #000; box-shadow: 2px 2px #9fe8d4, -2px -2px #2d6a5c; display: grid; gap: 4px; font-size: 12px; line-height: 13px; }
.layers ul { background: #000; padding: 1px 1px 0 2px; width: 117px; }
.layers label { display: flex; gap: 2px; height: 16px; align-items: center; }
.layers input { appearance: none; margin: 0; width: 14px; height: 14px; border: 2px solid #fff; background: #fff; box-shadow: inset 0 0 0 2px #000; }
.layers input:checked { border-color: #00009c; box-shadow: inset 0 0 0 2px #00006c; }
.layers i { width: 14px; height: 14px; }
.layers .red { background: #f00; }
.layers .green { background: #429800; }
.layers span { flex: 1; display: flex; align-items: center; justify-content: space-between; height: 14px; padding: 0 2px 0 1px; background: var(--aqua); }
.layers .w { background: #fff; }
.layers .g { background: #00a57c; }
.layers .o { background: #fdc64c; }
.layers .s { background: #9bb3bd; }
.layers .l { background: #d9d9d9; }
.selected { border: 1px solid #000; height: 20px; background: #fdc64c; padding-left: 3px; font-size: 12px; line-height: 18px; }
.board { flex: 1; width: 0; height: 100%; }

.right { width: 165px; flex: none; display: flex; flex-direction: column; border-left: 2px solid #2d6a5c; border-right: 2px solid #9fe8d4; font: bold 15px/17px var(--mono); }
.tools { display: grid; grid-template-columns: repeat(4, 38px); gap: 2px; padding: 2px 1px 4px 2px; border-bottom: 1px solid #5a8a8a; }
.tools button { width: 38px; height: 38px; background: var(--aqua); border: 3px solid; border-color: var(--hi) var(--lo) var(--lo) var(--hi); }
.tools svg { width: 30px; height: 30px; }
.tools .alert { border-color: #e01010 #a01010 #a01010 #e01010; }
.f { fill: none; stroke: #000; }
.t { fill: none; stroke: #000; stroke-width: 2; }
.popup { background: #000; display: grid; gap: 2px; }
.popup header { height: 32px; background: #fff; display: flex; align-items: center; justify-content: space-between; padding: 0 7px 0 94px; font: 16px/20px var(--ui); color: #999; }
.popup a, .mode { background: var(--aqua); height: 27px; padding-left: 93px; line-height: 26px; overflow: hidden; }
.popup .mode { height: 14px; line-height: 14px; padding-left: 97px; }
.popfoot { background: var(--teal); height: 59px; padding: 31px 1px 2px; }
.popfoot button { width: 100%; height: 26px; background: var(--aqua); border: 2px solid; border-color: var(--hi) var(--lo) var(--lo) var(--hi); }
.minimap { flex: 1; width: 100%; height: 0; }
.coords { height: 45px; margin-bottom: 2px; padding: 6px 3px; background: var(--teal); border: solid #9fe8d4; border-width: 2px 0 2px; font-weight: normal; }

.xybar { flex: none; height: 34px; display: flex; background: var(--cream); border: solid #000; border-width: 1px 0 1px 2px; font: bold 12px/16px var(--mono); align-items: stretch; }
.tick { width: 30px; margin-right: 2px; border: 2px solid #ddd9a8; box-shadow: 2px 1px #000; }
.tick.on { width: 28px; margin-right: 0; border: 3px solid var(--teal); box-shadow: inset 1px 1px #fff, inset -2px -2px #b0a880, 1px 0 #000; }
.xybar label { width: 48px; padding: 8px 0 0 4px; border-right: 2px solid #000; white-space: nowrap; }
.xybar input { width: 171px; margin: 1px 2px; background: var(--cream); border: 3px solid; border-color: #99986f #cccca0 #cccca0 #99986f; }
.xybar .bang { width: 30px; margin-right: 2px; }
.xybar output { flex: 1; padding: 8px 3px; }
.unit { width: 80px; border: solid var(--teal); border-width: 2px 1px 2px 6px; background: var(--teal); box-shadow: -2px 0 #000, inset 2px 2px #9fe8d4, inset -2px -2px #2d6a5c; font-size: 15px; gap: 8px; }
.unit i { width: 12px; height: 7px; border: 2px solid; border-color: #9fe8d4 #2d8a72 #2d8a72 #9fe8d4; }
.status { flex: none; height: 31px; padding: 2px; background: #5f9090; }
.status p { height: 28px; border: 1px solid #000; background: #b5ffff; box-shadow: inset 3px 3px #d4ffff, inset -3px -3px #5f9090; text-align: center; font: bold 12px/26px var(--mono); padding-right: 20px; }
.taskedge { flex: none; height: 10px; background: #a6bbd4; border-bottom: 3px solid #111; display: flex; gap: 2px; padding: 0 4px 3px; }
.taskedge i { width: 79px; background: #dcb0b8; }
.taskedge .lav { width: 24px; background: #b8b8dc; }

/* Word window floating on the desktop */
.word { position: absolute; left: 952px; top: 189px; width: 1031px; height: 601px; display: flex; flex-direction: column; background: #a9c6ee; border: solid #6f94c8; border-width: 0 0 1px 1px; box-shadow: 0 0 12px rgba(0, 0, 0, .5); }
.wtitle { flex: none; height: 34px; background: #fff; display: flex; align-items: center; padding-right: 18px; white-space: nowrap; }
.orb { width: 44px; height: 14px; margin-left: 5px; position: relative; z-index: 1; }
.qat { width: 188px; height: 26px; padding: 0 11px 0 16px; border: 1px solid #b8c0cc; border-left: 0; border-radius: 0 13px 13px 0; display: flex; align-items: center; gap: 8px; }
.qat svg { width: 17px; height: 16px; }
.qat button { width: 18px; }
.qat .dd, .dd { width: 6px; height: 4px; fill: #5a7aa8; }
.qat .n + .n { width: 4px; }
.more { margin: 0 14px 0 10px; }
.wtitle h2 { width: 330px; font-size: 16px; }
.ctx { width: 119px; align-self: flex-end; height: 31px; padding: 4px 7px; border: 1px solid #e8e4c8; border-width: 0 1px; background: linear-gradient(#fff, #fdf8cc 70%, #f8e060); }
.wctl { margin-left: auto; }
.tabs { flex: none; height: 29px; background: #bfdbff; display: flex; padding-left: 60px; color: #15428b; white-space: nowrap; }
.tabs > a, .ctxtabs a { padding: 4px 15px; line-height: 22px; }
.tabs .on { padding: 4px 11px; margin: 1px 3px 0 0; line-height: 20px; border: 1px solid #9cbce8; border-bottom: 0; border-radius: 3px 3px 0 0; background: linear-gradient(#fff, #dfe9f7); }
.ctxtabs { display: flex; margin-left: 5px; width: 119px; border: solid #a8c4e4; border-width: 0 1px; }
.tabs .whelp { margin: 8px 7px 0 auto; width: 14px; height: 14px; border-radius: 7px; background: #2a60c8; color: #fff; font: bold 11px/14px var(--ui); box-shadow: 0 0 0 1px #b8ccf0; }
.ribbon { flex: none; height: 122px; margin: 0 1px 0 3px; padding: 2px 1px; display: flex; gap: 4px; background: linear-gradient(#dbe7f5, #c8dcf2 30%, #d8e9f8); border: 1px solid #8fb4e0; border-radius: 4px; }
.grp { flex: none; display: flex; flex-direction: column; border: 1px solid #a4c0e2; border-radius: 3px; color: #15428b; background: linear-gradient(#dde8f5, #d2e0f2 15%, #c6d9f0 16%, #d8e8f6); }
.grp .body { flex: 1; display: flex; padding: 4px 3px 0; }
.grp h3 { height: 22px; display: flex; align-items: center; padding-right: 5px; font-size: 15px; line-height: 22px; background: #c1d8f0; color: #3e6aaa; white-space: nowrap; }
.grp h3 span { flex: 1; text-align: center; }
.lch { width: 10px; height: 10px; fill: none; stroke: #6a88b4; margin-left: 5px; }
.clip { width: 82px; }
.font { width: 245px; }
.para { width: 190px; }
.styles { width: 361px; }
.big { flex: 1; flex-direction: column; justify-content: flex-start; gap: 8px; padding-top: 4px; white-space: nowrap; }
.big .dd { margin-top: 2px; }
.stack { width: 28px; display: grid; gap: 12px; align-content: start; padding-top: 2px; }
.stack svg, .set svg, .one svg { width: 16px; height: 16px; }
.set svg.dd { width: 6px; height: 4px; }
.set svg.tip { align-self: flex-start; margin-top: 4px; fill: #2a50c0; }
.grp .rows { flex-direction: column; gap: 5px; color: #111; padding-left: 2px; }
.row { display: flex; gap: 4px; height: 25px; }
.set, .one { border: 1px solid #9ab8de; border-radius: 3px; background: linear-gradient(#dce9f8, #c3d8f1 50%, #d3e4f6); height: 25px; }
.set { display: flex; }
.set button { width: 27px; }
.set .arr { width: 12px; }
.para .set + .set button { width: 25px; }
.para .set + .set .arr { width: 12px; }
.one { width: 27px; }
.serif { font: bold 16px/18px var(--serif); }
.serif sub, .serif sup { font-size: 9px; line-height: 9px; color: #2a50c0; }
.serif sub { align-self: flex-end; margin-bottom: 3px; }
.serif sup { align-self: flex-start; margin-top: 4px; }
.serif .sm { font-size: 14px; }
.combo { background: #e8f0fa; border-radius: 0; margin-right: -3px; }
.combo + .combo { margin-right: 1px; }
.combo input { border: 0; padding: 0 3px; background: none; font: 15px/20px var(--ui); }
.combo button { width: 16px; }
.fname { width: 93px; }
.fsize { width: 47px; }
.wen { flex-direction: column; font-size: 12px; line-height: 13px; color: #2a50c0; }
.wen small { font-size: 10px; line-height: 10px; color: #222; }
.boxed { border: 1px solid #556; padding: 0 2px; line-height: 16px; }
.shade { background: #aaa; padding: 0 3px; }
.ring { border: 1px solid #222; border-radius: 8px; width: 16px; height: 16px; font-size: 11px; line-height: 14px; }
.ln { fill: none; stroke: #111; stroke-width: 2; }
.hot { background: linear-gradient(#fbd8a8, #fdb450 50%, #ffd890); }
.gallery { flex: none; width: 286px; height: 75px; padding: 0 0 0 4px; border: 1px solid #b8d0ec; background: #d6e5f7; display: flex; gap: 8px; align-items: center; }
.card { width: 80px; height: 60px; padding-top: 7px; background: #fff; flex-direction: column; justify-content: flex-start; overflow: hidden; align-items: stretch; gap: 8px; color: #0a1e6a; font-size: 14px; line-height: 18px; }
.card b { font: bold 19px/26px var(--serif); color: #000; overflow: hidden; text-align: left; margin: 0 3px; white-space: nowrap; }
.card.h1 b { font-size: 26px; }
.gscroll { flex: 1; margin-left: -3px; height: 100%; display: grid; }
.gscroll button { border: 1px solid #b0c8e8; background: #dce9f8; }
.aa { font: bold 24px var(--serif); }
.edit { width: 50px; }
.edit .big { padding-top: 5px; flex: none; gap: 5px; }
.bino { width: 37px; height: 36px; border: 1px solid #b0c8e4; border-radius: 3px; display: grid; place-items: center; background: linear-gradient(#e4eefa 70%, #c8dcf2 71%); }
.edit .dd { margin-top: 6px; }

.docwrap { flex: 1; min-height: 0; margin-top: 5px; padding-left: 4px; display: flex; }
.doc { flex: 1; min-width: 0; background: #fff; overflow: hidden; }
.corner { width: 24px; height: 45px; border: solid #aaa; border-width: 0 0 1px; background: linear-gradient(#aaa, #aaa) right bottom / 1px 24px no-repeat; }
.cellbox { margin: 1px 0 0 16px; padding: 2px 0 0 6px; height: 340px; border: solid #000; border-width: 1px 0 0 1px; font: 14px/23px var(--serif); white-space: nowrap; }
.in { text-indent: 28px; }
.cellbox h4 { font-weight: bold; line-height: 21px; }
.cellbox h4 span { display: inline-block; width: 25px; }
.wide { font-family: "Noto Sans CJK SC", sans-serif; line-height: 1; }
.er { text-decoration: underline wavy #e03030 1px; }
.gr { text-decoration: underline wavy #2a9a2a 1px; }
.ret { font: 12px/12px "DejaVu Sans", sans-serif; color: #888; }
mark { background: #a6cdf0; color: #0a2a50; display: inline-block; line-height: 23px; }
.figure { position: relative; margin: -1px 0 0 233px; }
.note { position: absolute; border: 1px solid #333; font-size: 9px; line-height: 16px; padding: 4px 6px; background: #fff; }
.note.a { left: 2px; top: 12px; width: 59px; height: 31px; }
.note.b { left: 392px; top: 0; width: 159px; height: 50px; background: #daeef3; }
.vscroll { width: 18px; display: flex; flex-direction: column; align-items: center; background: #a9c6ee; }
.split { width: 10px; height: 2px; background: #345; flex: none; }
.vscroll > svg { margin-top: 3px; }
.vtrack { flex: 1; width: 14px; background: #7896c4; display: flex; flex-direction: column; align-items: center; justify-content: space-between; padding: 6px 0; }
.vthumb { width: 14px; height: 18px; margin-top: 106px; background: repeating-linear-gradient(#eef4fc 0 2px, #7890b8 2px 3px); border: 2px solid #eef4fc; }
.dk { width: 8px; height: 8px; fill: #344a70; }
.hscroll { flex: none; height: 17px; margin-right: 17px; background: #7896c4; display: flex; align-items: center; justify-content: space-between; padding: 0 4px; border-top: 1px solid #dce8f8; }
.hthumb { flex: 1; height: 14px; margin: 0 93px 0 51px; background: linear-gradient(#f4f7fb, #c0cfe4); border: 1px solid #5a78a8; }
.wstatus { flex: none; height: 28px; display: flex; align-items: center; background: linear-gradient(#cfe0fa, #b4cff6 50%, #c6dcfc); border-top: 2px solid #7a9cd0; color: #15295c; white-space: nowrap; }
.wstatus > span { padding: 0 9px; border-right: 1px solid #88a8d8; box-shadow: 1px 0 #fff; height: 24px; line-height: 24px; }
.wstatus .lang { display: flex; align-items: center; gap: 15px; }
.views { margin-left: auto; display: flex; border: 1px solid #88a8d8; background: #c8dcf6; height: 24px; }
.views button { width: 23px; }
.views svg { width: 15px; height: 15px; }
.wstatus b { font-weight: normal; margin-left: 9px; }
.grip { margin: 6px 1px 0 6px; }
.pointer { position: absolute; left: 974px; top: 895px; z-index: 3; }
```
